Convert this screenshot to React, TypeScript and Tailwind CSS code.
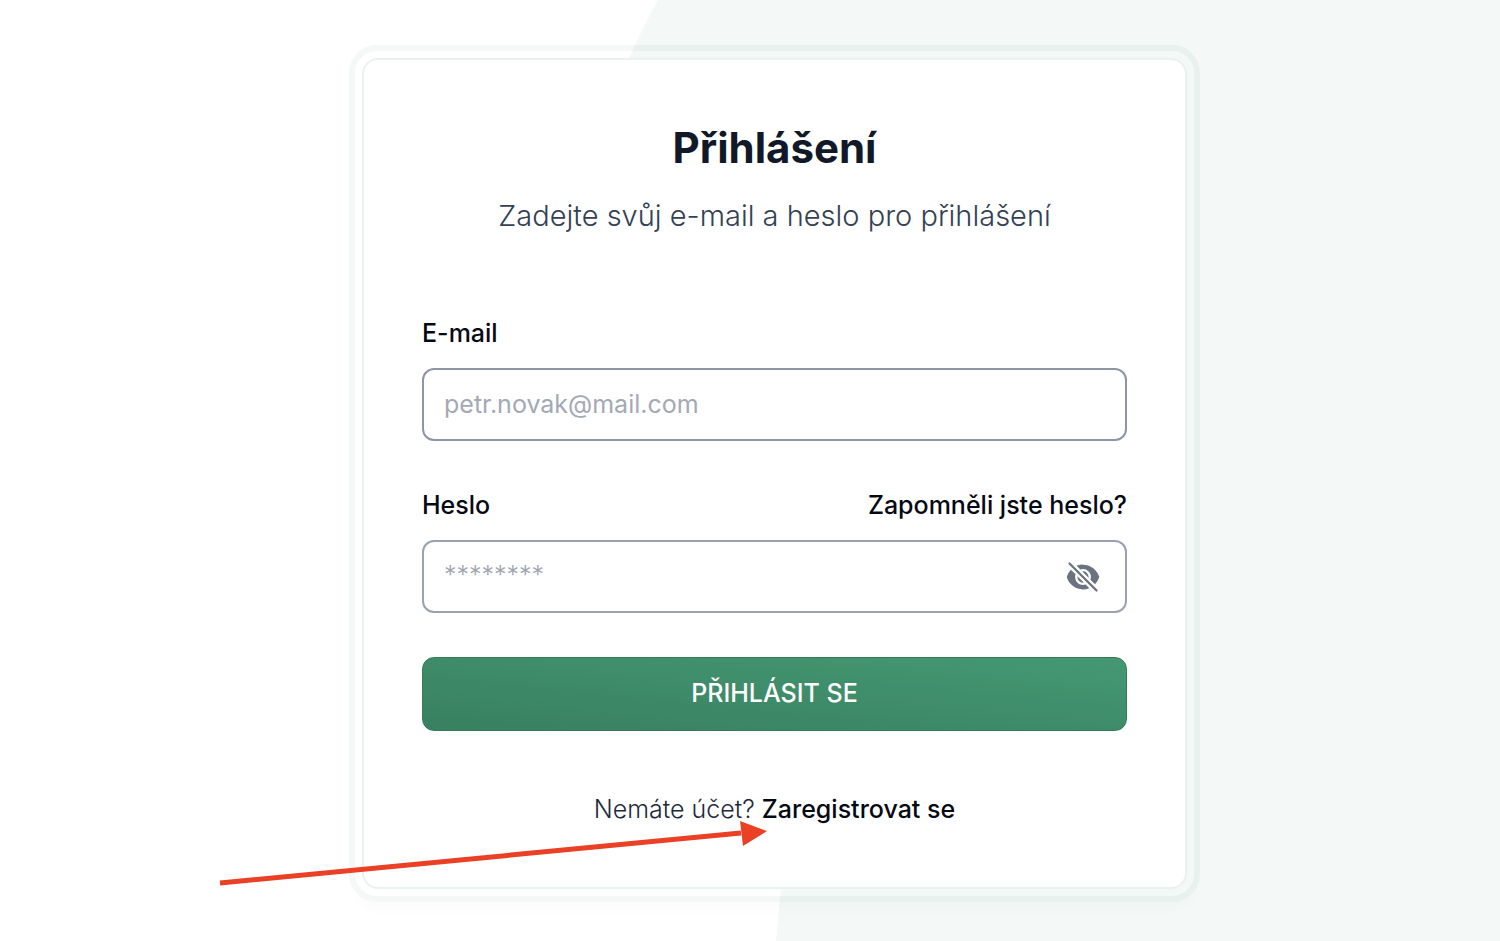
import { useState } from "react";
import { HiEyeSlash, HiEye } from "react-icons/hi2";

export default function App() {
  const [showPassword, setShowPassword] = useState(false);

  return (
    <main className="relative min-h-screen overflow-hidden bg-white pt-[45px] pb-[39px] pl-[49px] font-['Inter',sans-serif] text-[#050914]">
      {/* Background shape */}
      <svg
        aria-hidden="true"
        className="absolute inset-0 h-full w-full"
        viewBox="0 0 1500 941"
        preserveAspectRatio="none"
      >
        <path
          d="M658 0Q643 27 629 58C520 330 820 560 780 897L776 941H1500V0Z"
          fill="#f4f8f7"
        />
      </svg>

      <div className="relative mx-auto w-full max-w-[851px] rounded-[28px] border-[6px] border-[#3f8f6b]/6 p-[7px] shadow-[0_14px_16px_-8px_rgba(0,0,0,0.02)]">
        {/* Card */}
        <div className="rounded-2xl border-2 border-[#e9f2ef] bg-white px-[58px] pt-[58px] pb-[62px]">
          <h1 className="text-center text-[42px] leading-[60px] font-bold text-[#111827]">
            Přihlášení
          </h1>
          <p className="mt-[18px] text-center text-[29px] leading-[40px] font-light text-[#334155]">
            Zadejte svůj e-mail a heslo pro přihlášení
          </p>

          <form className="mt-[81px]" onSubmit={(e) => e.preventDefault()}>
            <label htmlFor="email" className="block text-[25px] leading-[32px] font-medium">
              E-mail
            </label>
            <input
              id="email"
              type="email"
              placeholder="petr.novak@mail.com"
              className="mt-[19px] block h-[73px] w-full rounded-xl border-2 border-[#8e96a6] bg-white px-5 pb-0.5 text-[25px] outline-none placeholder:text-[#a3a9b5]"
            />

            <div className="mt-12 flex items-center justify-between text-[25px] leading-[32px] font-medium">
              <label htmlFor="password">Heslo</label>
              <a href="#">Zapomněli jste heslo?</a>
            </div>
            <div className="relative mt-[19px]">
              <input
                id="password"
                type={showPassword ? "text" : "password"}
                placeholder="********"
                className="block h-[73px] w-full rounded-xl border-2 border-[#9aa1b0] bg-white pr-20 pb-1 pl-5 text-[25px] font-light outline-none placeholder:text-[#9ca3af]"
              />
              <button
                type="button"
                aria-label="Zobrazit heslo"
                onClick={() => setShowPassword(!showPassword)}
                className="absolute inset-y-0 right-[26px] flex items-center text-[#6b7280]"
              >
                {showPassword ? <HiEye className="size-9" /> : <HiEyeSlash className="size-9" />}
              </button>
            </div>

            <button
              type="submit"
              className="mt-11 h-[74px] w-full rounded-xl border border-[#347a5b] bg-linear-to-tr from-[#38805f] to-[#459873] text-[25px] font-medium text-white uppercase"
            >
              Přihlásit se
            </button>
          </form>

          <p className="mt-[62px] text-center text-[25px] leading-[32px] font-light text-[#1e293b]">
            Nemáte účet?{" "}
            <a href="#" className="font-medium text-[#050914]">
              Zaregistrovat se
            </a>
          </p>
        </div>

        {/* Arrow to the sign up link */}
        <svg
          aria-hidden="true"
          className="pointer-events-none absolute bottom-1.5 -left-[137px] h-[72px] w-[560px]"
          viewBox="0 0 560 72"
          fill="#ea4025"
        >
          <path d="M2 65L523 15" stroke="#ea4025" strokeWidth="5" />
          <path d="M522 3L549 13L525 28Z" />
        </svg>
      </div>
    </main>
  );
}
